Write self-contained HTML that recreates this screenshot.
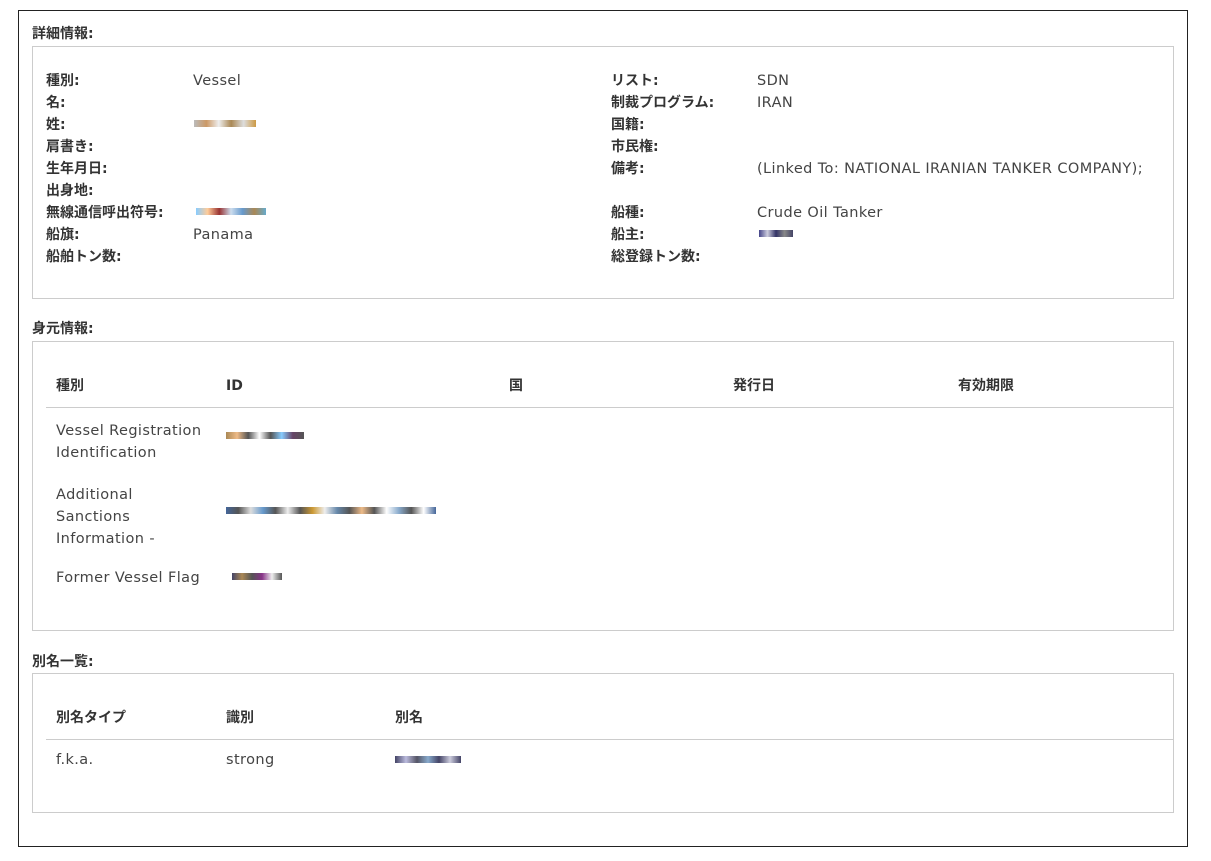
<!DOCTYPE html><html><head><meta charset="utf-8"><style>
body{margin:0;background:#fff;width:1211px;height:861px;position:relative;font-family:"DejaVu Sans","Noto Sans CJK JP",sans-serif;font-size:14.5px;letter-spacing:0.4px;color:#444;}
.a{position:absolute;white-space:nowrap;line-height:16px}
.b{font-weight:bold;color:#333;font-size:14px;letter-spacing:0}
.box{position:absolute;border:1px solid #ccc}
.hl{position:absolute;height:1px;background:#ccc;left:46px;width:1127px}
.r{position:absolute;height:7px}
</style></head><body>
<div class="box" style="left:18px;top:10px;width:1168px;height:835px;border-color:#222"></div>
<div class="a b" style="left:32px;top:26px">詳細情報:</div>
<div class="box" style="left:32px;top:46px;width:1140px;height:251px"></div>
<div class="a b" style="left:46px;top:73px">種別:</div><div class="a" style="left:193px;top:73px">Vessel</div>
<div class="a b" style="left:46px;top:95px">名:</div>
<div class="a b" style="left:46px;top:117px">姓:</div>
<div class="r" style="left:194px;top:120px;width:62px;background:linear-gradient(90deg,#bbb,#c96,#eee,#a85,#ddd,#c94)"></div>
<div class="a b" style="left:46px;top:139px">肩書き:</div>
<div class="a b" style="left:46px;top:161px">生年月日:</div>
<div class="a b" style="left:46px;top:183px">出身地:</div>
<div class="a b" style="left:46px;top:205px">無線通信呼出符号:</div>
<div class="r" style="left:196px;top:208px;width:70px;background:linear-gradient(90deg,#8cf,#fc9,#933,#cde,#69c,#a85,#6ac)"></div>
<div class="a b" style="left:46px;top:227px">船旗:</div><div class="a" style="left:193px;top:227px">Panama</div>
<div class="a b" style="left:46px;top:249px">船舶トン数:</div>
<div class="a b" style="left:611px;top:73px">リスト:</div><div class="a" style="left:757px;top:73px">SDN</div>
<div class="a b" style="left:611px;top:95px">制裁プログラム:</div><div class="a" style="left:757px;top:95px">IRAN</div>
<div class="a b" style="left:611px;top:117px">国籍:</div>
<div class="a b" style="left:611px;top:139px">市民権:</div>
<div class="a b" style="left:611px;top:161px">備考:</div><div class="a" style="left:757px;top:161px">(Linked To: NATIONAL IRANIAN TANKER COMPANY);</div>
<div class="a b" style="left:611px;top:205px">船種:</div><div class="a" style="left:757px;top:205px">Crude Oil Tanker</div>
<div class="a b" style="left:611px;top:227px">船主:</div>
<div class="r" style="left:759px;top:230px;width:34px;background:linear-gradient(90deg,#448,#ccd,#336,#888,#446)"></div>
<div class="a b" style="left:611px;top:249px">総登録トン数:</div>

<div class="a b" style="left:32px;top:321px">身元情報:</div>
<div class="box" style="left:32px;top:341px;width:1140px;height:288px"></div>
<div class="a b" style="left:56px;top:378px">種別</div>
<div class="a b" style="left:226px;top:378px">ID</div>
<div class="a b" style="left:509px;top:378px">国</div>
<div class="a b" style="left:733px;top:378px">発行日</div>
<div class="a b" style="left:958px;top:378px">有効期限</div>
<div class="hl" style="top:407px"></div>
<div class="a" style="left:56px;top:420px;line-height:22px">Vessel Registration<br>Identification</div>
<div class="r" style="left:226px;top:432px;width:78px;background:linear-gradient(90deg,#a85,#eb8,#555,#fff,#555,#8cf,#646,#555)"></div>
<div class="a" style="left:56px;top:484px;line-height:22px">Additional<br>Sanctions<br>Information -</div>
<div class="r" style="left:226px;top:507px;width:210px;background:linear-gradient(90deg,#469,#555,#ddd,#69c,#555,#eee,#555,#c93,#eee,#68a,#555,#eb8,#555,#fff,#8ac,#555,#fff,#469)"></div>
<div class="a" style="left:56px;top:570px">Former Vessel Flag</div>
<div class="r" style="left:232px;top:573px;width:50px;background:linear-gradient(90deg,#446,#a85,#555,#838,#eee,#555)"></div>

<div class="a b" style="left:32px;top:654px">別名一覧:</div>
<div class="box" style="left:32px;top:673px;width:1140px;height:138px"></div>
<div class="a b" style="left:56px;top:710px">別名タイプ</div>
<div class="a b" style="left:226px;top:710px">識別</div>
<div class="a b" style="left:395px;top:710px">別名</div>
<div class="hl" style="top:739px"></div>
<div class="a" style="left:56px;top:752px">f.k.a.</div>
<div class="a" style="left:226px;top:752px">strong</div>
<div class="r" style="left:395px;top:756px;width:66px;background:linear-gradient(90deg,#446,#bbd,#556,#8ac,#446,#ccd,#446)"></div>
</body></html>
